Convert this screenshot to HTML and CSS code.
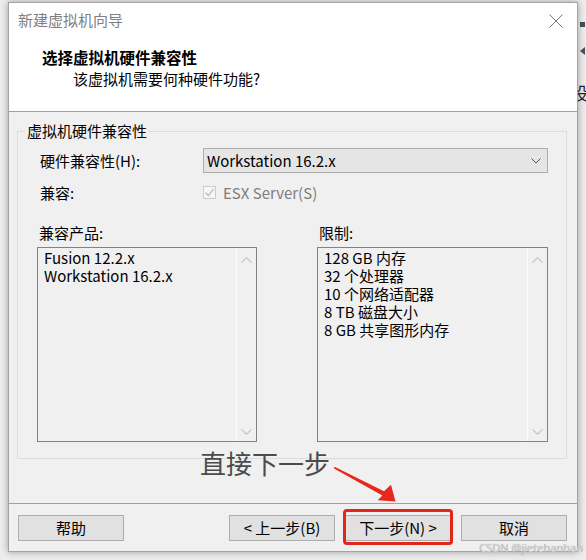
FILE: index.html
```html
<!DOCTYPE html>
<html lang="zh-CN">
<head>
<meta charset="utf-8">
<title>新建虚拟机向导</title>
<link rel="stylesheet" href="styles.css">
</head>
<body>
<div class="desktop">
  <div class="peek peek-sq"></div>
  <div class="peek peek-tri"></div>
  <div class="peek peek-char">设</div>

  <div class="window">
    <div class="top">
      <div class="titlebar">
        <span class="title">新建虚拟机向导</span>
        <svg class="close" width="14" height="14" viewBox="0 0 14 14"><path d="M0.5 0.5 L13.5 13.5 M13.5 0.5 L0.5 13.5" stroke="#777" stroke-width="1" fill="none"/></svg>
      </div>
      <div class="header">
        <div class="h-title">选择虚拟机硬件兼容性</div>
        <div class="h-sub">该虚拟机需要何种硬件功能?</div>
      </div>
    </div>

    <div class="body">
      <fieldset class="group">
        <legend>虚拟机硬件兼容性</legend>
        <div class="row">
          <span class="label">硬件兼容性(H):</span>
          <div class="select">
            <span>Workstation 16.2.x</span>
            <svg width="10" height="6" viewBox="0 0 10 6"><path d="M0.5 0.5 L5 5 L9.5 0.5" stroke="#555" stroke-width="1" fill="none"/></svg>
          </div>
        </div>
        <div class="row row2">
          <span class="label">兼容:</span>
          <div class="check">
            <span class="box"><svg width="11" height="11" viewBox="0 0 11 11"><path d="M1.5 5.5 L4.3 8.5 L9.8 1.8" stroke="#bdbdbd" stroke-width="1.2" fill="none"/></svg></span>
            <span class="check-text">ESX Server(S)</span>
          </div>
        </div>
        <div class="lists">
          <div class="col">
            <div class="col-label">兼容产品:</div>
            <div class="listbox">
              <div class="items">
                <div>Fusion 12.2.x</div>
                <div>Workstation 16.2.x</div>
              </div>
              <div class="scroll">
                <svg width="11" height="6" viewBox="0 0 11 6"><path d="M0.5 5.5 L5.5 0.8 L10.5 5.5" stroke="#c6c6c6" stroke-width="1.2" fill="none"/></svg>
                <svg width="11" height="6" viewBox="0 0 11 6"><path d="M0.5 0.5 L5.5 5.2 L10.5 0.5" stroke="#c6c6c6" stroke-width="1.2" fill="none"/></svg>
              </div>
            </div>
          </div>
          <div class="col">
            <div class="col-label">限制:</div>
            <div class="listbox">
              <div class="items">
                <div>128 GB 内存</div>
                <div>32 个处理器</div>
                <div>10 个网络适配器</div>
                <div>8 TB 磁盘大小</div>
                <div>8 GB 共享图形内存</div>
              </div>
              <div class="scroll">
                <svg width="11" height="6" viewBox="0 0 11 6"><path d="M0.5 5.5 L5.5 0.8 L10.5 5.5" stroke="#c6c6c6" stroke-width="1.2" fill="none"/></svg>
                <svg width="11" height="6" viewBox="0 0 11 6"><path d="M0.5 0.5 L5.5 5.2 L10.5 0.5" stroke="#c6c6c6" stroke-width="1.2" fill="none"/></svg>
              </div>
            </div>
          </div>
        </div>
      </fieldset>
    </div>

    <div class="footer">
      <button class="btn">帮助</button>
      <div class="spacer"></div>
      <button class="btn">&lt; 上一步(B)</button>
      <div class="next-wrap">
        <button class="btn">下一步(N) &gt;</button>
        <div class="highlight"></div>
      </div>
      <button class="btn">取消</button>
    </div>
  </div>

  <div class="annot">直接下一步</div>
  <svg class="arrow" width="70" height="45" viewBox="330 462 70 45">
    <polygon points="334.5,466.8 384,491.2 391,484.8 395.5,501.5 377.8,500.2 382.3,495.6 334,468.6" fill="#e8271f"/>
  </svg>
  <div class="watermark">CSDN @jietehanhan</div>
</div>
</body>
</html>
```

FILE: styles.css
```css
body {
  margin: 0;
}

.desktop {
  position: relative;
  width: 586px;
  height: 560px;
  box-sizing: border-box;
  padding: 2px 0 0 8px;
  overflow: hidden;
  background: #ededed;
  font-family: "Noto Sans CJK SC", "Noto Sans", sans-serif;
  font-size: 15px;
  color: #000;
}

.peek {
  position: absolute;
}
.peek-sq {
  left: 580px;
  top: 22px;
  width: 5px;
  height: 5px;
  background: #46505a;
}
.peek-tri {
  left: 580px;
  top: 47px;
  width: 0;
  height: 0;
  border-top: 4px solid transparent;
  border-bottom: 4px solid transparent;
  border-right: 5px solid #46505a;
}
.peek-char {
  left: 571px;
  top: 82px;
  font-size: 17px;
  line-height: 22px;
  color: #222;
}

.window {
  position: relative;
  z-index: 1;
  width: 570px;
  height: 550px;
  box-sizing: border-box;
  border: 1px solid #a3a3a3;
  background: #f0f0f0;
  display: flex;
  flex-direction: column;
  box-shadow: 0 0 7px rgba(0, 0, 0, 0.35);
}

.top {
  background: #fff;
  border-bottom: 1px solid #a0a0a0;
}

.titlebar {
  height: 34px;
  display: flex;
  align-items: center;
  justify-content: space-between;
  padding: 0 14px 0 9px;
}
.title {
  color: #808080;
  line-height: 20px;
}
.close {
  display: block;
  margin-top: 1px;
}

.header {
  padding: 9px 0 21px 33px;
}
.h-title {
  font-weight: 700;
  line-height: 22px;
  font-size: 15.5px;
}
.h-sub {
  line-height: 22px;
  padding-left: 31px;
}

.body {
  flex: 1;
}

.group {
  margin: 9px 10px 0 8px;
  padding: 0 18px 16px 19px;
  border: 1px solid #dcdcdc;
  min-width: 0;
}
.group legend {
  margin-left: -12px;
  padding: 0 2px;
  line-height: 20px;
}

.row {
  display: flex;
  align-items: center;
  height: 25px;
  margin-top: 7px;
}
.label {
  width: 163px;
  margin-left: 3px;
  line-height: 20px;
}

.select {
  width: 345px;
  height: 25px;
  box-sizing: border-box;
  border: 1px solid #adadad;
  background: #e5e5e5;
  display: flex;
  align-items: center;
  justify-content: space-between;
  padding: 0 6px 0 3px;
  line-height: 20px;
}
.select svg {
  display: block;
}

.check {
  display: flex;
  align-items: center;
}
.box {
  width: 13px;
  height: 13px;
  box-sizing: border-box;
  border: 1px solid #cccccc;
  background: #f7f7f7;
  display: flex;
  align-items: center;
  justify-content: center;
  margin-right: 7px;
}
.box svg {
  display: block;
}
.check-text {
  color: #7d7d7d;
  line-height: 20px;
}

.lists {
  display: grid;
  grid-template-columns: 220px 231px;
  column-gap: 60px;
  margin-top: 18px;
}
.col-label {
  line-height: 20px;
  margin: 0 0 4px 2px;
}
.listbox {
  height: 195px;
  box-sizing: border-box;
  border: 1px solid #828282;
  background: #f0f0f0;
  display: flex;
}
.items {
  flex: 1;
  padding: 1px 0 0 6px;
  line-height: 18px;
}
.scroll {
  width: 19px;
  border-left: 1px solid #fbfbfb;
  display: flex;
  flex-direction: column;
  align-items: center;
  justify-content: space-between;
  padding: 9px 0 6px;
}
.scroll svg {
  display: block;
}

.footer {
  height: 48px;
  box-sizing: border-box;
  border-top: 1px solid #a0a0a0;
  display: flex;
  align-items: flex-start;
  gap: 10px;
  padding: 11px 10px 0 9px;
}
.spacer {
  flex: 1;
}
.btn {
  width: 106px;
  height: 26px;
  box-sizing: border-box;
  border: 1px solid #adadad;
  background: #e1e1e1;
  font-family: inherit;
  font-size: 15px;
  line-height: 20px;
  color: #000;
  padding: 0;
  margin: 0;
}
.next-wrap {
  position: relative;
}
.next-wrap .btn {
  display: block;
}
.highlight {
  position: absolute;
  left: -2px;
  right: -2px;
  top: -6px;
  bottom: -4px;
  border: 3.5px solid #e3261c;
  border-radius: 4px;
}

.annot {
  position: absolute;
  left: 200px;
  top: 448px;
  z-index: 2;
  font-size: 26px;
  line-height: 30px;
  color: #4b4b4b;
}
.arrow {
  position: absolute;
  left: 330px;
  top: 462px;
  z-index: 2;
}
.watermark {
  position: absolute;
  right: 3px;
  top: 541px;
  z-index: 2;
  font-family: "Noto Sans", sans-serif;
  font-size: 11px;
  line-height: 14px;
  color: #cfcfcf;
  text-shadow: 0 0 1px #9a9a9a;
}
```
